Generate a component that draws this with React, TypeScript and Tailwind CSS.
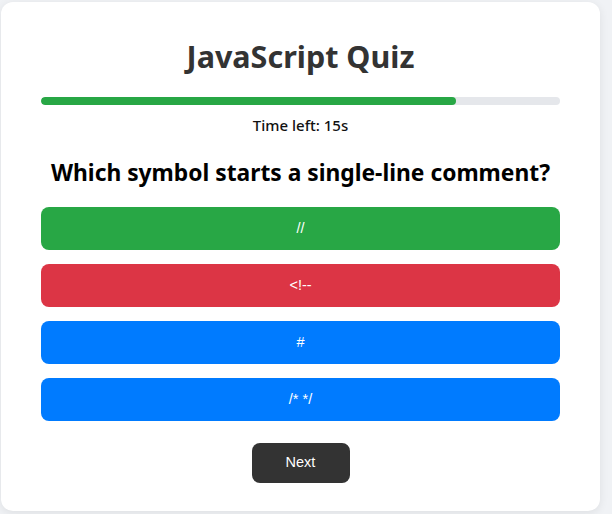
import React from "react";

export default function App() {
  const options = [
    { label: "//", cls: "bg-[#28a745]" },
    { label: "<!--", cls: "bg-[#dc3545]" },
    { label: "#", cls: "bg-[#007bff]" },
    { label: "/* */", cls: "bg-[#007bff]" },
  ];
  return (
    <div className="min-h-screen bg-[#f0f2f5] pt-[2px] pl-[1px]" style={{ fontFamily: '"Noto Sans", sans-serif' }}>
      <div className="w-[599px] h-[509px] bg-white rounded-[12px] shadow-[0_2px_10px_rgba(0,0,0,0.08)] px-[40px] pt-[34px] flex flex-col">
        <h1 className="text-[30.5px] leading-[40px] font-bold text-[#333] text-center">JavaScript Quiz</h1>
        <div className="mt-[21px] h-[8px] rounded-full bg-[#e5e7eb] overflow-hidden">
          <div className="h-full w-[80%] bg-[#28a745] rounded-full" />
        </div>
        <div className="mt-[9px] text-[15px] leading-[22px] font-medium text-[#111] text-center">Time left: 15s</div>
        <h2 className="mt-[21px] text-[22.8px] leading-[32px] font-bold text-black text-center whitespace-nowrap">Which symbol starts a single-line comment?</h2>
        <div className="mt-[18px] flex flex-col gap-[14px]">
          {options.map((o) => (
            <button
              key={o.label}
              className={`h-[43px] w-full rounded-[8px] text-white text-[14.5px] ${o.cls}`}
              style={{ fontFamily: '"Liberation Sans", Arial, sans-serif' }}
            >
              {o.label}
            </button>
          ))}
        </div>
        <div className="mt-[22px] flex justify-center">
          <button
            className="w-[98px] h-[40px] rounded-[8px] bg-[#333] text-white text-[14.5px]"
            style={{ fontFamily: '"Liberation Sans", Arial, sans-serif' }}
          >
            Next
          </button>
        </div>
      </div>
    </div>
  );
}
